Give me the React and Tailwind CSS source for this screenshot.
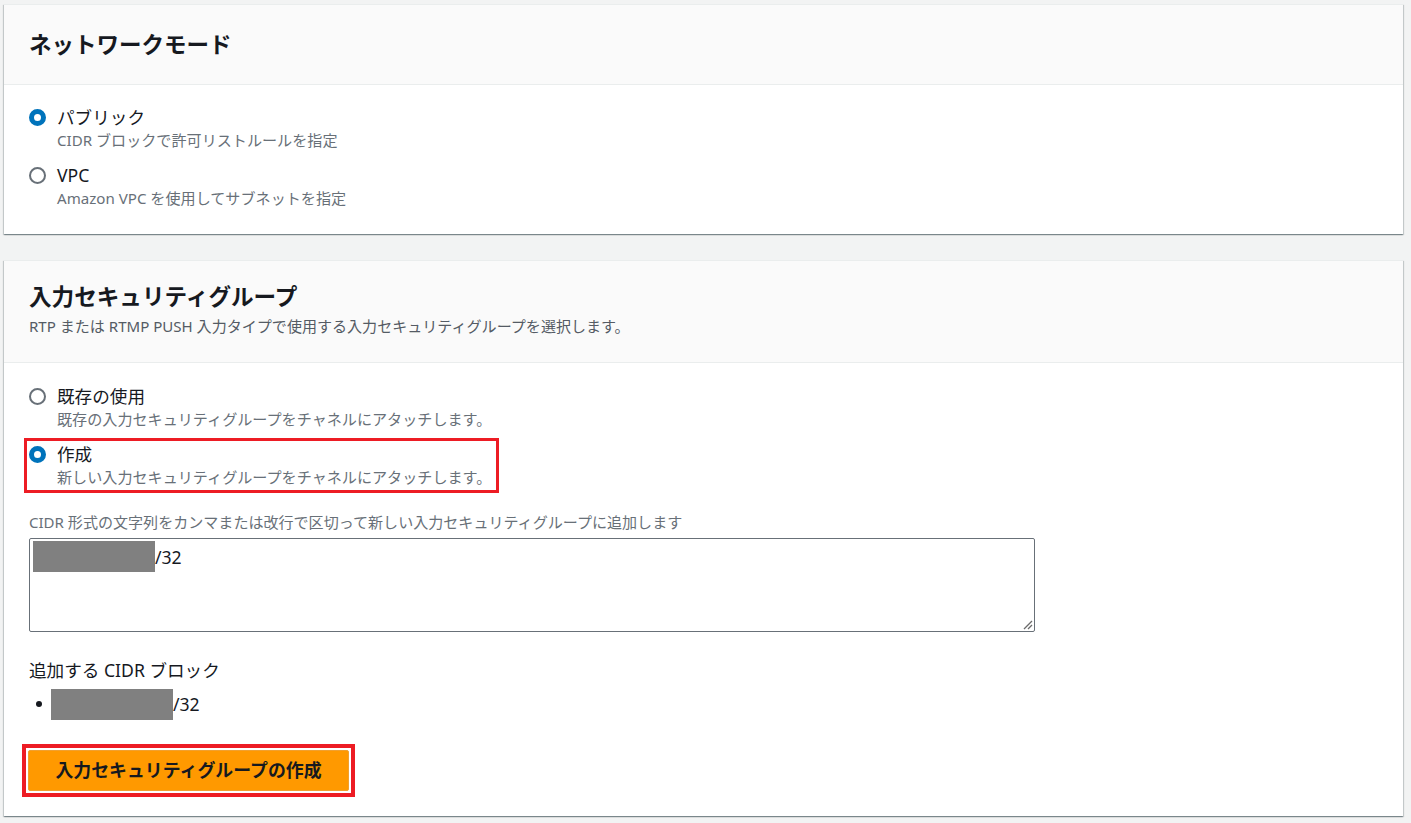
import React from 'react';

const font = { fontFamily: '"Noto Sans", "Noto Sans CJK JP", sans-serif' };

const Radio = ({ checked }) =>
  checked ? (
    <span className="mt-[4px] block h-[17px] w-[17px] shrink-0 rounded-full border-[5px] border-[#0073bb] bg-white" />
  ) : (
    <span className="mt-[4px] block h-[17px] w-[17px] shrink-0 rounded-full border-2 border-[#687078] bg-white" />
  );

const Option = ({ checked, label, desc }) => (
  <div className="flex gap-[11px]">
    <Radio checked={checked} />
    <div>
      <div className="text-[17.6px] leading-[24px] text-[#16191f]">{label}</div>
      <div className="text-[15.1px] leading-[22px] text-[#687078]">{desc}</div>
    </div>
  </div>
);

const Redacted = () => <span className="inline-block h-[31px] w-[122px] bg-[#808080]" />;

const Card = ({ children }) => (
  <section className="w-[1399px] border-t border-[#eaeded] bg-white shadow-[0_1px_1px_0_rgba(0,28,36,0.3),1px_1px_1px_0_rgba(0,28,36,0.15),-1px_1px_1px_0_rgba(0,28,36,0.15)]">
    {children}
  </section>
);

export default function App() {
  return (
    <div className="min-h-screen bg-[#f2f3f3] pl-[4px] pt-[4px]" style={font}>
      <div className="flex flex-col gap-[26px]">
        {/* ネットワークモード */}
        <Card>
          <header className="flex h-[80px] items-center border-b border-[#eaeded] bg-[#fafafa] px-[25px]">
            <h2 className="text-[22.5px] font-bold leading-[30px] text-[#16191f]">ネットワークモード</h2>
          </header>
          <div className="flex flex-col gap-[12px] px-[25px] pb-[25px] pt-[20px]">
            <Option checked label="パブリック" desc="CIDR ブロックで許可リストルールを指定" />
            <Option label="VPC" desc="Amazon VPC を使用してサブネットを指定" />
          </div>
        </Card>

        {/* 入力セキュリティグループ */}
        <Card>
          <header className="border-b border-[#eaeded] bg-[#fafafa] px-[25px] pb-[25px] pt-[21px]">
            <h2 className="text-[22.6px] font-bold leading-[30px] text-[#16191f]">入力セキュリティグループ</h2>
            <p className="mt-[3px] text-[15.05px] leading-[22px] text-[#545b64]">
              RTP または RTMP PUSH 入力タイプで使用する入力セキュリティグループを選択します。
            </p>
          </header>
          <div className="px-[25px] pb-[19px] pt-[21px]">
            <Option label="既存の使用" desc="既存の入力セキュリティグループをチャネルにアタッチします。" />
            <div className="-ml-[5px] mt-[8px] w-fit border-[3px] border-[#ed1c24] pb-[2px] pl-[2px] pr-[5px] pt-[1px]">
              <Option checked label="作成" desc="新しい入力セキュリティグループをチャネルにアタッチします。" />
            </div>

            <div className="mt-[18px] text-[15.05px] leading-[22px] text-[#687078]">
              CIDR 形式の文字列をカンマまたは改行で区切って新しい入力セキュリティグループに追加します
            </div>
            <div className="relative mt-[5px] h-[94px] w-[1006px] rounded-[2px] border border-[#687078] bg-white pl-[3px] pt-[2px]">
              <div className="flex items-center">
                <Redacted />
                <span className="text-[17.6px] leading-[24px] text-[#16191f]">/32</span>
              </div>
              <svg className="absolute bottom-[1px] right-[1px]" width="10" height="10" viewBox="0 0 10 10">
                <path d="M9 1L1 9M9 5L5 9" stroke="#6b6b6b" strokeWidth="1.3" />
              </svg>
            </div>

            <div className="mt-[26px] text-[17.6px] leading-[24px] text-[#16191f]">追加する CIDR ブロック</div>
            <ul className="mt-[6px]">
              <li className="flex h-[32px] items-center">
                <span className="ml-[7px] mr-[9px] block h-[6px] w-[6px] rounded-full bg-[#16191f]" />
                <Redacted />
                <span className="text-[17.6px] leading-[24px] text-[#16191f]">/32</span>
              </li>
            </ul>

            <div className="-ml-[7px] mt-[24px] w-fit border-4 border-[#ed1c24] bg-white p-[2px]">
              <button className="h-[41px] w-[321px] rounded-[2px] border border-[#f0a030] bg-[#ff9900] text-[17.9px] font-bold text-[#16191f]">
                入力セキュリティグループの作成
              </button>
            </div>
          </div>
        </Card>
      </div>
    </div>
  );
}
